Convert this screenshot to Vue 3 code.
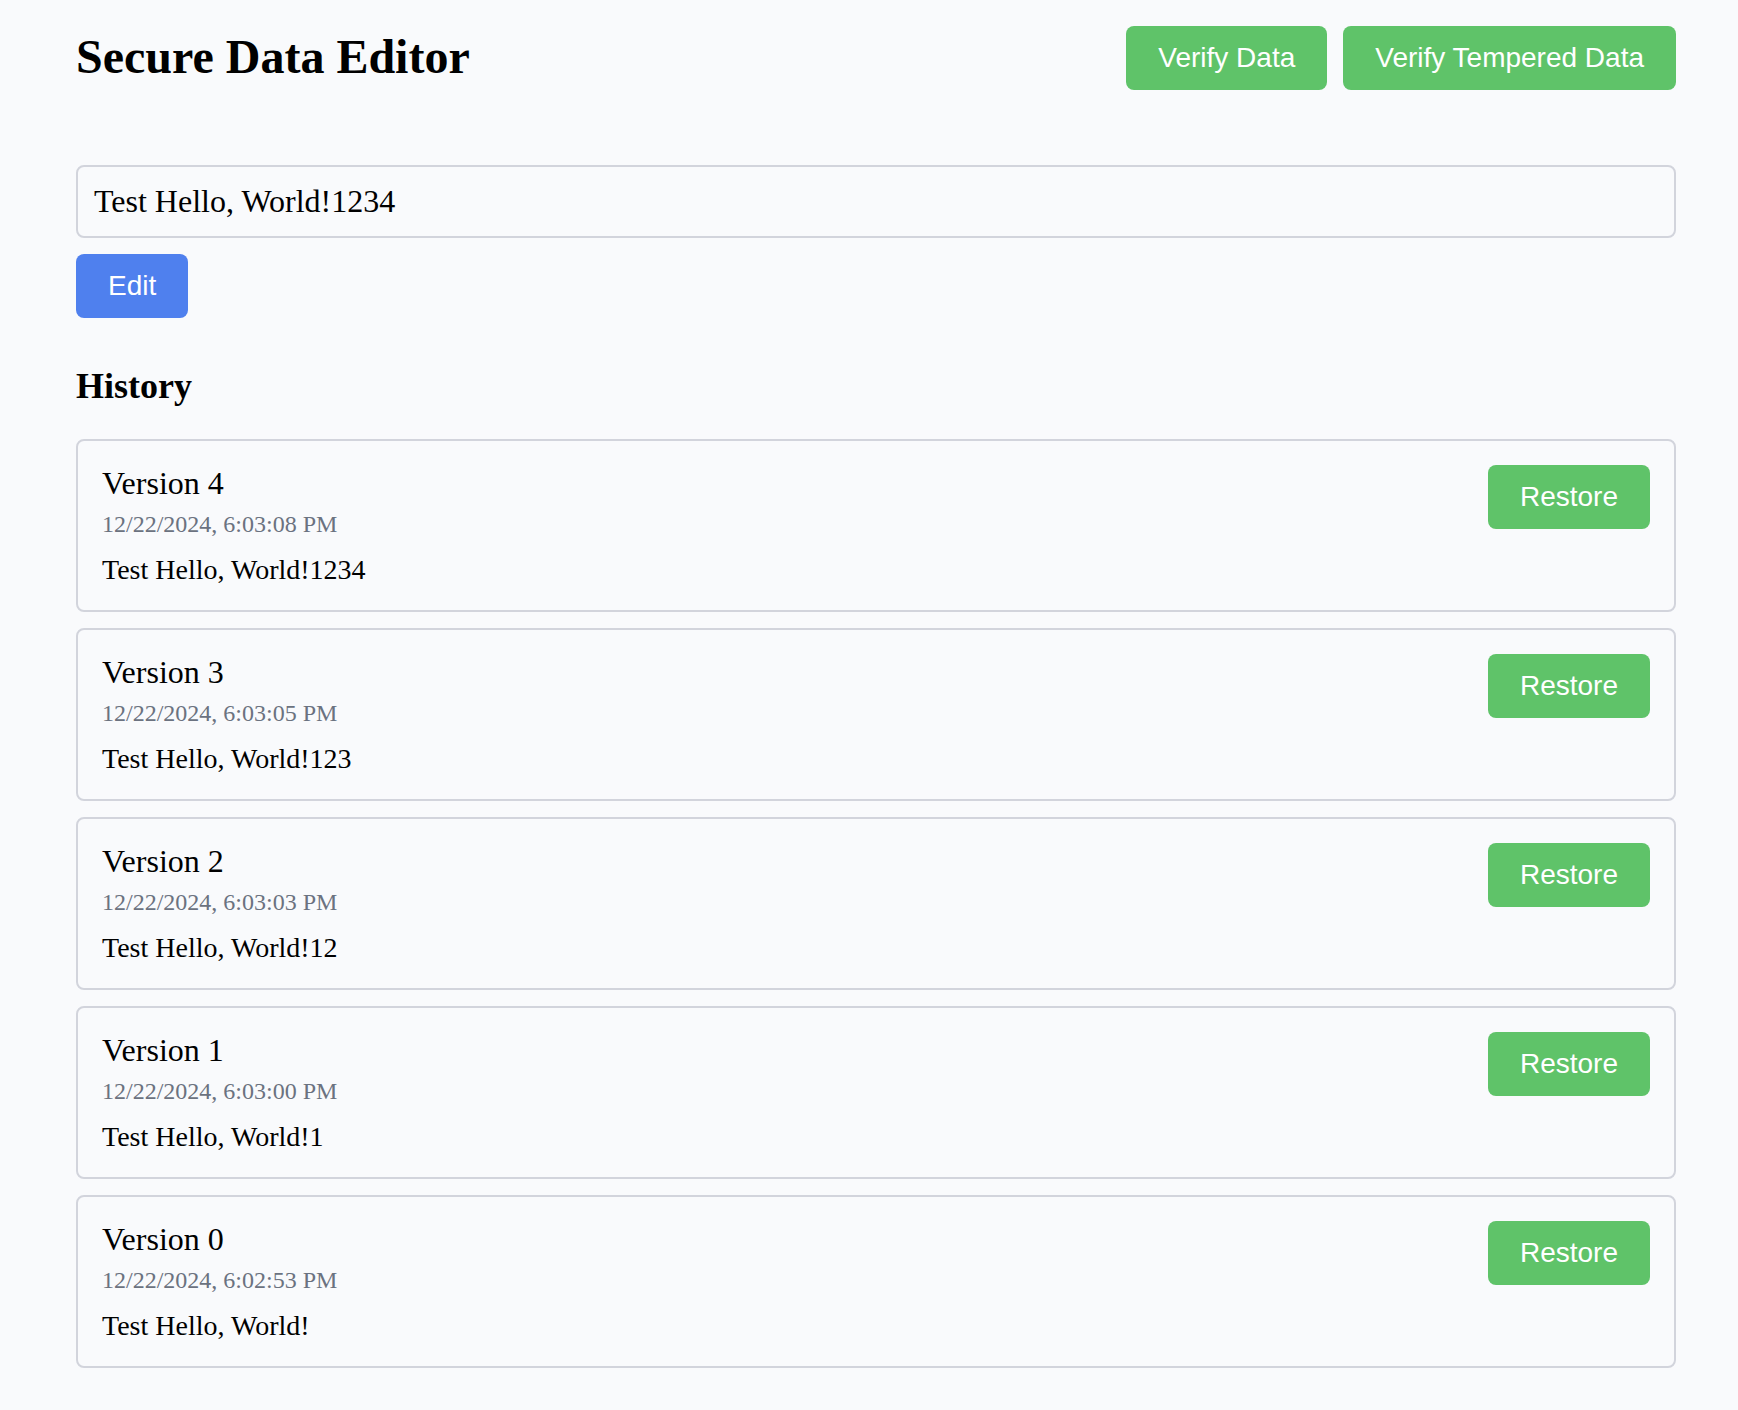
<script setup>
import { ref } from 'vue'

const data = ref('Test Hello, World!1234')

const history = [
  { version: 4, time: '12/22/2024, 6:03:08 PM', data: 'Test Hello, World!1234' },
  { version: 3, time: '12/22/2024, 6:03:05 PM', data: 'Test Hello, World!123' },
  { version: 2, time: '12/22/2024, 6:03:03 PM', data: 'Test Hello, World!12' },
  { version: 1, time: '12/22/2024, 6:03:00 PM', data: 'Test Hello, World!1' },
  { version: 0, time: '12/22/2024, 6:02:53 PM', data: 'Test Hello, World!' },
]

function restore(entry) {
  data.value = entry.data
}
</script>

<template>
  <main class="page">
    <header class="header">
      <h1 class="title">Secure Data Editor</h1>
      <div class="actions">
        <button type="button" class="btn btn-green">Verify Data</button>
        <button type="button" class="btn btn-green">Verify Tempered Data</button>
      </div>
    </header>

    <section class="editor">
      <div class="value">{{ data }}</div>
      <button type="button" class="btn btn-blue">Edit</button>
    </section>

    <section>
      <h2 class="subtitle">History</h2>
      <ul class="history">
        <li v-for="entry in history" :key="entry.version" class="card">
          <div>
            <div class="version">Version {{ entry.version }}</div>
            <div class="time">{{ entry.time }}</div>
            <div class="content">{{ entry.data }}</div>
          </div>
          <button type="button" class="btn btn-green" @click="restore(entry)">Restore</button>
        </li>
      </ul>
    </section>
  </main>
</template>

<style>
html {
  background: #f9fafc;
}
</style>

<style scoped>
.page {
  padding: 26px 62px 42px 76px;
  color: #000;
  font-family: "Liberation Serif", "Times New Roman", serif;
}

.header {
  display: flex;
  justify-content: space-between;
  align-items: flex-start;
  margin-bottom: 75px;
}

.title {
  margin: 0;
  font-size: 48px;
  line-height: 62px;
}

.actions {
  display: flex;
  gap: 16px;
}

.btn {
  height: 64px;
  padding: 0 32px;
  border: 0;
  border-radius: 8px;
  color: #fff;
  font-family: "Liberation Sans", Arial, sans-serif;
  font-size: 28px;
  line-height: 32px;
  cursor: pointer;
}

.btn-green {
  background: #5fc369;
}

.btn-blue {
  background: #4f80ee;
}

.editor {
  display: flex;
  flex-direction: column;
  align-items: flex-start;
  gap: 16px;
}

.value {
  box-sizing: border-box;
  width: 100%;
  padding: 16px;
  border: 2px solid #d2d4dc;
  border-radius: 8px;
  font-size: 32px;
  line-height: 37px;
}

.subtitle {
  margin: 48px 0 32px;
  font-size: 36px;
  line-height: 41px;
}

.history {
  display: flex;
  flex-direction: column;
  gap: 16px;
  margin: 0;
  padding: 0;
  list-style: none;
}

.card {
  display: flex;
  justify-content: space-between;
  align-items: flex-start;
  padding: 24px;
  border: 2px solid #d2d4dc;
  border-radius: 8px;
}

.version {
  font-size: 32px;
  line-height: 37px;
}

.time {
  margin-top: 8px;
  color: #6b7280;
  font-size: 24px;
  line-height: 29px;
}

.content {
  margin-top: 14px;
  font-size: 28px;
  line-height: 33px;
}
</style>
